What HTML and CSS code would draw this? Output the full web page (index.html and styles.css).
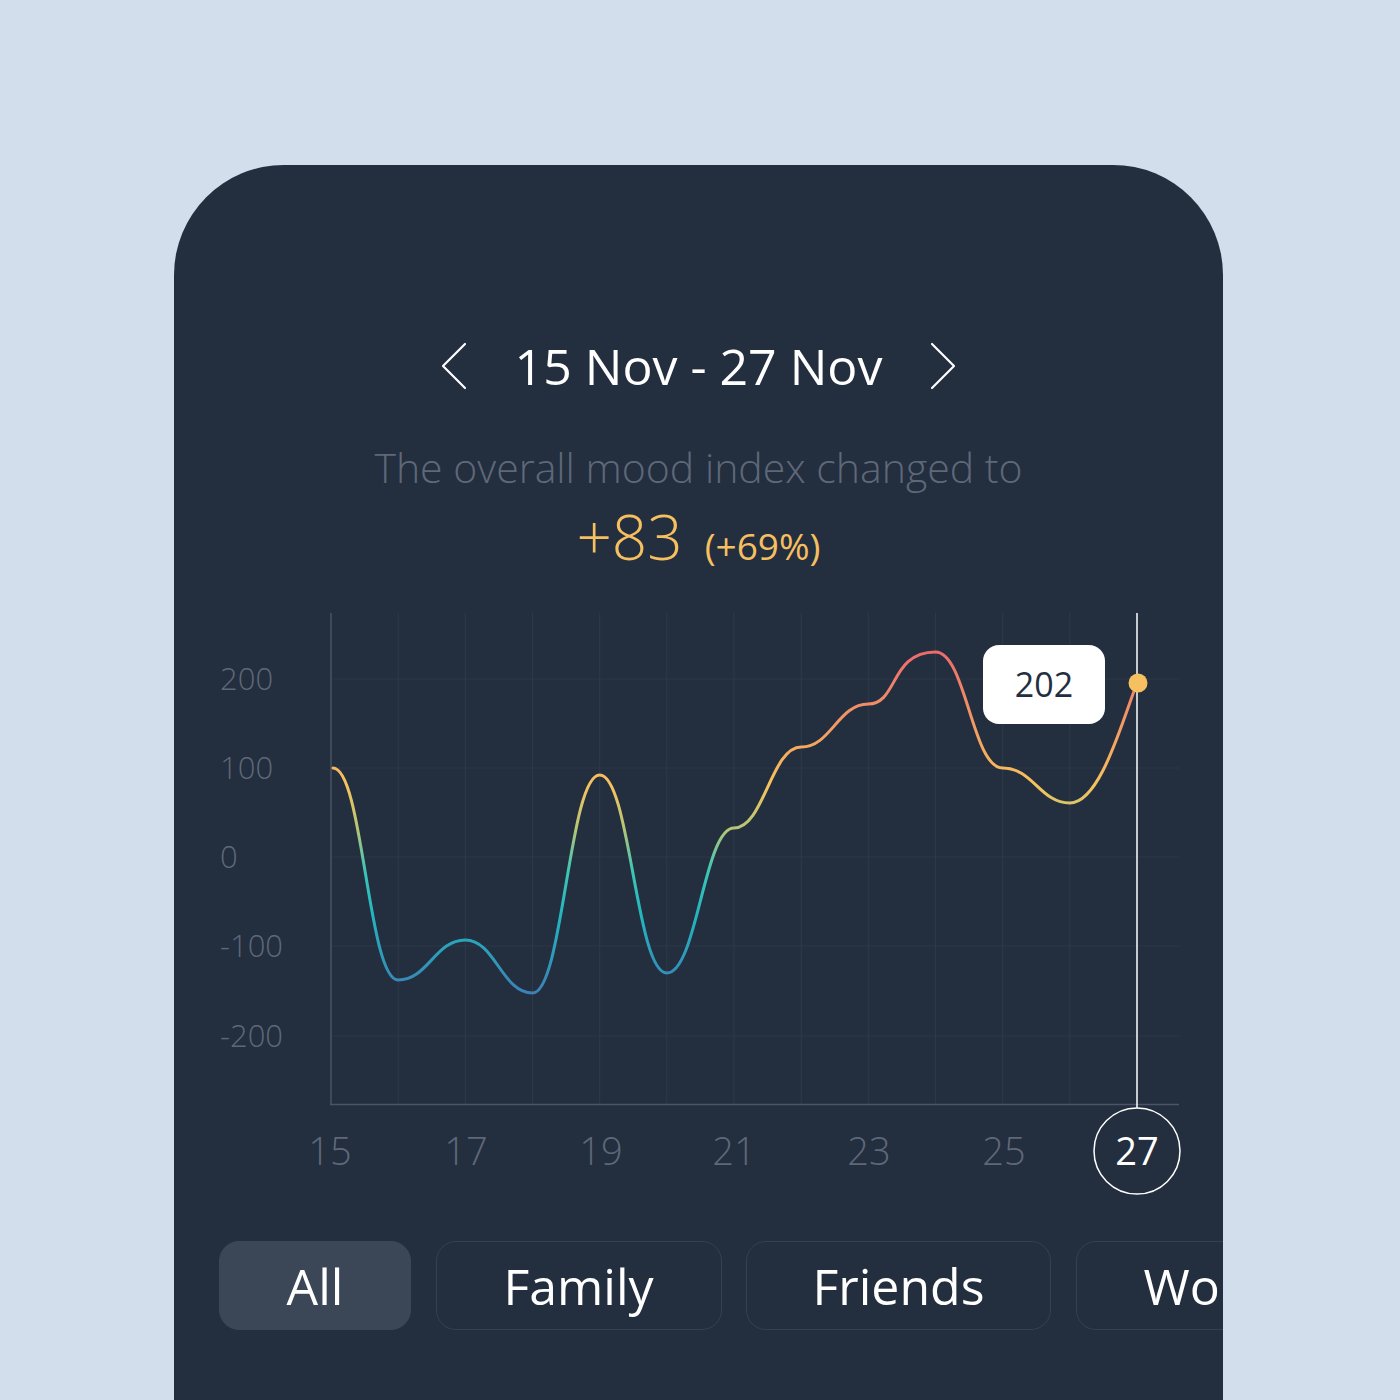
FILE: index.html
```html
<!DOCTYPE html>
<html lang="en">
<head>
<meta charset="utf-8">
<title>Mood index</title>
<link rel="stylesheet" href="styles.css">
</head>
<body>
<main class="card">
  <header class="range">
    <button class="nav" aria-label="Previous">
      <svg width="26" height="48" viewBox="0 0 26 48"><polyline points="24,2 2,24 24,46" fill="none" stroke="#fff" stroke-width="2.2" stroke-linecap="round" stroke-linejoin="round"/></svg>
    </button>
    <h1 class="range-title">15 Nov - 27 Nov</h1>
    <button class="nav" aria-label="Next">
      <svg width="26" height="48" viewBox="0 0 26 48"><polyline points="2,2 24,24 2,46" fill="none" stroke="#fff" stroke-width="2.2" stroke-linecap="round" stroke-linejoin="round"/></svg>
    </button>
  </header>
  <p class="subtitle">The overall mood index changed to</p>
  <p class="change"><span class="change-value">+83</span><span class="change-pct">(+69%)</span></p>

  <svg class="chart" width="1049" height="626" viewBox="174 574 1049 626">
    <defs>
      <linearGradient id="mood" gradientUnits="userSpaceOnUse" x1="0" y1="650" x2="0" y2="995">
        <stop offset="0" stop-color="#ee6a6c"/>
        <stop offset="0.145" stop-color="#f08b68"/>
        <stop offset="0.29" stop-color="#f5aa5f"/>
        <stop offset="0.39" stop-color="#f7c35c"/>
        <stop offset="0.52" stop-color="#b3c577"/>
        <stop offset="0.64" stop-color="#3cc6b5"/>
        <stop offset="0.77" stop-color="#25b4bd"/>
        <stop offset="0.9" stop-color="#2f98b9"/>
        <stop offset="1" stop-color="#3e7fb6"/>
      </linearGradient>
    </defs>
    <g class="grid">
      <line x1="331" y1="679" x2="1179" y2="679"/>
      <line x1="331" y1="768" x2="1179" y2="768"/>
      <line x1="331" y1="857" x2="1179" y2="857"/>
      <line x1="331" y1="946" x2="1179" y2="946"/>
      <line x1="331" y1="1036" x2="1179" y2="1036"/>
      <line x1="398.2" y1="613" x2="398.2" y2="1104"/>
      <line x1="465.3" y1="613" x2="465.3" y2="1104"/>
      <line x1="532.5" y1="613" x2="532.5" y2="1104"/>
      <line x1="599.7" y1="613" x2="599.7" y2="1104"/>
      <line x1="666.8" y1="613" x2="666.8" y2="1104"/>
      <line x1="734" y1="613" x2="734" y2="1104"/>
      <line x1="801.2" y1="613" x2="801.2" y2="1104"/>
      <line x1="868.3" y1="613" x2="868.3" y2="1104"/>
      <line x1="935.5" y1="613" x2="935.5" y2="1104"/>
      <line x1="1002.7" y1="613" x2="1002.7" y2="1104"/>
      <line x1="1069.8" y1="613" x2="1069.8" y2="1104"/>
    </g>
    <g class="axis">
      <line x1="331" y1="613" x2="331" y2="1104.5"/>
      <line x1="330" y1="1104.5" x2="1179" y2="1104.5"/>
    </g>
    <g class="ylabels">
      <text x="220" y="690">200</text>
      <text x="220" y="779">100</text>
      <text x="220" y="868">0</text>
      <text x="220" y="957">-100</text>
      <text x="220" y="1047">-200</text>
    </g>
    <g class="xlabels">
      <text x="330" y="1165">15</text>
      <text x="466" y="1165">17</text>
      <text x="601" y="1165">19</text>
      <text x="734" y="1165">21</text>
      <text x="869" y="1165">23</text>
      <text x="1004" y="1165">25</text>
    </g>
    <path class="curve" d="M333 768
      C363 768 368 980 398.2 980
      C428 980 435 940 465.3 940
      C495 940 502 993 532.5 993
      C563 993 569 775 599.7 775
      C630 775 636 973 666.8 973
      C697 973 704 828 734 828
      C764 828 771 747 801.2 747
      C831 747 838 704 868.3 704
      C898 704 890 652 935.5 652
      C966 652 972 768 1002.7 768
      C1033 768 1040 803 1069.8 803
      C1100 803 1122 722 1137 683"/>
    <line class="cursor" x1="1137" y1="613" x2="1137" y2="1108"/>
    <circle class="dot" cx="1138" cy="683" r="9.5"/>
    <rect class="tip" x="983" y="645" width="122" height="79" rx="16"/>
    <text class="tip-text" x="1044" y="697">202</text>
    <circle class="day-ring" cx="1137" cy="1151" r="43"/>
    <text class="day-active" x="1137" y="1165">27</text>
  </svg>

  <nav class="tabs">
    <button class="tab tab-active">All</button>
    <button class="tab tab-family">Family</button>
    <button class="tab tab-friends">Friends</button>
    <button class="tab tab-work">Work</button>
  </nav>
</main>
</body>
</html>
```
FILE: styles.css
```css
html, body {
  margin: 0;
  padding: 0;
}
body {
  background: #d3deec;
  font-family: "Open Sans", "Noto Sans", sans-serif;
  padding-top: 165px;
  height: 1235px;
  overflow: hidden;
}
.card {
  margin-left: 174px;
  width: 1049px;
  height: 1235px;
  background: #232e3f;
  border-radius: 110px 110px 0 0;
  overflow: hidden;
  padding-top: 161px;
  box-sizing: border-box;
}
.range {
  display: flex;
  justify-content: center;
  align-items: center;
  height: 80px;
  gap: 48px;
}
.nav {
  background: none;
  border: 0;
  padding: 0;
  width: 26px;
  height: 48px;
  display: flex;
}
.range-title {
  margin: 0;
  font-weight: 400;
  font-size: 50px;
  line-height: 80px;
  color: #ffffff;
  white-space: nowrap;
}
.subtitle {
  margin: 36px 0 0;
  text-align: center;
  font-size: 41px;
  font-weight: 300;
  line-height: 50px;
  color: #5e6878;
  white-space: nowrap;
}
.change {
  margin: 6px 0 0;
  text-align: center;
  line-height: 76px;
  color: #f6bf5f;
  height: 76px;
}
.change-value {
  font-size: 62px;
  font-weight: 300;
}
.change-pct {
  font-size: 37px;
  font-weight: 400;
  margin-left: 22px;
}
.chart {
  display: block;
}
.grid line {
  stroke: #2d3848;
  stroke-width: 1.2;
}
.axis line {
  stroke: #4a5466;
  stroke-width: 1.5;
}
.ylabels text {
  font-family: "Open Sans", sans-serif;
  font-size: 31px;
  font-weight: 300;
  fill: #5e6878;
}
.xlabels text {
  font-family: "Open Sans", sans-serif;
  font-size: 38px;
  font-weight: 300;
  fill: #5e6878;
  text-anchor: middle;
}
.curve {
  fill: none;
  stroke: url(#mood);
  stroke-width: 3;
  stroke-linecap: round;
}
.cursor {
  stroke: #ffffff;
  stroke-width: 1.5;
}
.dot {
  fill: #f6bf5f;
}
.tip {
  fill: #ffffff;
}
.tip-text {
  font-family: "Open Sans", sans-serif;
  font-size: 34px;
  font-weight: 400;
  fill: #232e3f;
  text-anchor: middle;
}
.day-ring {
  fill: #232e3f;
  stroke: #ffffff;
  stroke-width: 1.5;
}
.day-active {
  font-family: "Open Sans", sans-serif;
  font-size: 38px;
  font-weight: 400;
  fill: #ffffff;
  text-anchor: middle;
}
.tabs {
  display: flex;
  gap: 24.5px;
  margin-top: 41px;
  padding-left: 45px;
}
.tab {
  flex: none;
  height: 89px;
  box-sizing: border-box;
  border: 1.5px solid #354052;
  border-radius: 20px;
  background: transparent;
  color: #ffffff;
  font-family: "Open Sans", sans-serif;
  font-size: 50px;
  font-weight: 400;
  padding: 0;
  line-height: 1;
}
.tab-active {
  width: 192px;
  background: #3b4657;
  border-color: #3b4657;
}
.tab-family { width: 286px; }
.tab-friends { width: 305px; }
.tab-work {
  width: 260px;
  text-align: left;
  padding-left: 67px;
}
```
